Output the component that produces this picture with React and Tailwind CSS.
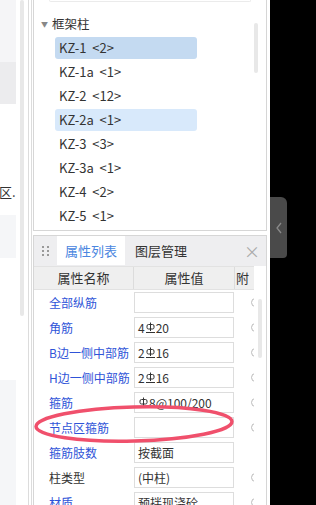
import React from "react";

const FONT = { fontFamily: '"Noto Sans CJK SC", "Noto Sans", sans-serif' };

function Rebar() {
  return (
    <svg width="9" height="12" viewBox="0 0 9 12" className="inline-block align-[-1px] mx-[1px]">
      <line x1="4.5" y1="0.5" x2="4.5" y2="9" stroke="#333" strokeWidth="1" />
      <rect x="1" y="2.5" width="7" height="4.5" rx="1.5" fill="none" stroke="#333" strokeWidth="1" />
      <line x1="0" y1="10.5" x2="9" y2="10.5" stroke="#333" strokeWidth="1" />
    </svg>
  );
}

const items = [
  { t: "KZ-1 <2>", sel: "strong" },
  { t: "KZ-1a <1>" },
  { t: "KZ-2 <12>" },
  { t: "KZ-2a <1>", sel: "light" },
  { t: "KZ-3 <3>" },
  { t: "KZ-3a <1>" },
  { t: "KZ-4 <2>" },
  { t: "KZ-5 <1>" },
];

const rows = [
  { n: "全部纵筋", v: null, blue: true, mark: true },
  { n: "角筋", v: ["4", "20"], blue: true, mark: true },
  { n: "B边一侧中部筋", v: ["2", "16"], blue: true, mark: true },
  { n: "H边一侧中部筋", v: ["2", "16"], blue: true, mark: true },
  { n: "箍筋", v: ["", "8@100/200"], blue: true, mark: true },
  { n: "节点区箍筋", v: null, blue: true, mark: true },
  { n: "箍筋肢数", v: "按截面", blue: true, mark: false },
  { n: "柱类型", v: "(中柱)", blue: false, mark: true },
  { n: "材质", v: "预拌现浇砼", blue: true, mark: true },
];

export default function App() {
  return (
    <div className="relative w-[316px] h-[505px] overflow-hidden bg-white flex text-[12px] text-[#333]" style={FONT}>
      {/* left strip */}
      <div className="w-[28px] flex shrink-0">
        <div className="w-[16px] flex flex-col overflow-hidden">
          <div className="h-[62px] bg-[#f5f5f7]" />
          <div className="h-[42px] bg-[#ececee]" />
          <div className="h-[111px] bg-white flex flex-col justify-end pb-[15px]">
            <span className="text-[13px] leading-[16px] whitespace-nowrap text-[#333] -ml-[1px]">区.</span>
          </div>
          <div className="h-[43px] bg-[#f5f6f8]" />
          <div className="h-[122px] bg-white" />
          <div className="flex-1 bg-[#f5f6f8]" />
        </div>
        <div className="w-[4px]" />
        <div className="w-[4px] h-[316px] rounded-full bg-[#e8e8e8]" />
      </div>
      {/* splitter lines */}
      <div className="w-[4px] shrink-0 border-l border-r border-[#dcdcdc]" />
      <div className="w-[1px] shrink-0" />
      {/* panels */}
      <div className="w-[234px] shrink-0 flex flex-col">
        {/* tree panel */}
        <div className="relative h-[231px] border-x border-b border-[#d6d6d6] bg-white">
          <div className="ml-[15px] w-[202px] h-[2px] border-x border-b border-[#ebebeb] rounded-b-[4px]" />
          <div className="flex items-center h-[22px] mt-[11px] pl-[7px]">
            <span className="text-[7px] text-[#888] mr-[4px]">▼</span>
            <span className="text-[12.5px] text-[#333]">框架柱</span>
          </div>
          <div className="flex flex-col gap-[2px] mt-[2px] pl-[21px] text-[13px]">
            {items.map((it) => (
              <div
                key={it.t}
                className={
                  "w-[142px] h-[22px] flex items-center pl-[4px] rounded-[3px] whitespace-pre " +
                  (it.sel === "strong" ? "bg-[#c4daf1]" : it.sel === "light" ? "bg-[#d8e9fb]" : "")
                }
              >
                {it.t.replace(" ", "  ")}
              </div>
            ))}
          </div>
          <div className="absolute left-[220px] top-[23px] w-[4px] h-[50px] rounded-full bg-[#e8e8e8]" />
        </div>
        <div className="h-[4px]" />
        {/* properties panel */}
        <div className="flex-1 border-x border-t border-[#d6d6d6] flex flex-col overflow-hidden">
          <div className="h-[30px] shrink-0 bg-[#eeeef0] flex items-stretch">
            <div className="w-[23px] flex items-center justify-center">
              <svg width="7" height="11" viewBox="0 0 7 11">
                {[0, 4, 8].map((y) => (
                  <g key={y}>
                    <rect x="0" y={y} width="2" height="2" fill="#999" />
                    <rect x="5" y={y} width="2" height="2" fill="#999" />
                  </g>
                ))}
              </svg>
            </div>
            <div className="w-[68px] bg-white flex items-center justify-center text-[13px] text-[#4a86e0] mb-[1px]">属性列表</div>
            <div className="pl-[10px] flex items-center text-[13px] text-[#333]">图层管理</div>
            <div className="flex-1" />
            <div className="w-[28px] flex items-center justify-center text-[#aaa] text-[16px] leading-none">×</div>
          </div>
          <div className="relative flex-1 bg-white overflow-hidden">
            <div className="w-[220px] overflow-hidden">
              <div className="flex w-[260px] h-[24px] bg-[#efefef] border-t border-[#e2e2e2] border-b border-[#dcdcdc] text-[13px] text-[#333]">
                <div className="w-[100px] shrink-0 flex items-center justify-center border-r border-[#dcdcdc]">属性名称</div>
                <div className="w-[101px] shrink-0 flex items-center justify-center border-r border-[#dcdcdc]">属性值</div>
                <div className="w-[40px] shrink-0 flex items-center pl-[1px]">附</div>
              </div>
              {rows.map((r) => (
                <div key={r.n} className="flex w-[260px] h-[25px] items-center text-[12px]">
                  <div className={"w-[100px] shrink-0 pl-[15px] whitespace-nowrap " + (r.blue ? "text-[#2f54d8]" : "text-[#333]")}>{r.n}</div>
                  <div className="w-[100px] shrink-0 h-[21px] border border-[#dddddd] flex items-center pl-[3px] text-[#333] whitespace-nowrap">
                    {Array.isArray(r.v) ? (
                      <span>
                        {r.v[0]}
                        <Rebar />
                        {r.v[1]}
                      </span>
                    ) : (
                      r.v
                    )}
                  </div>
                  <div className="w-[40px] shrink-0 flex items-center pl-[17px]">
                    {r.mark && <div className="w-[9px] h-[9px] rounded-full border border-[#bbb]" />}
                  </div>
                </div>
              ))}
            </div>
            <div className="absolute left-[224px] top-[33px] w-[4px] h-[59px] rounded-full bg-[#e8e8e8]" />
          </div>
        </div>
      </div>
      {/* gap and dark area */}
      <div className="w-[3px] shrink-0" />
      <div className="flex-1 bg-black relative">
        <div className="absolute left-0 top-[197px] w-[17px] h-[61px] bg-[#4a4a4a] rounded-tr-[6px] rounded-br-[4px] flex items-center justify-center">
          <svg width="8" height="12" viewBox="0 0 8 12">
            <polyline points="6,1 2,6 6,11" fill="none" stroke="#8a8a8a" strokeWidth="1.3" />
          </svg>
        </div>
      </div>
      {/* red annotation ellipse */}
      <svg className="absolute left-0 top-0 pointer-events-none" width="316" height="505">
        <ellipse cx="134" cy="424" rx="98" ry="17" transform="rotate(-1.5 134 424)" fill="none" stroke="#f0506c" strokeWidth="3.5" />
      </svg>
    </div>
  );
}
